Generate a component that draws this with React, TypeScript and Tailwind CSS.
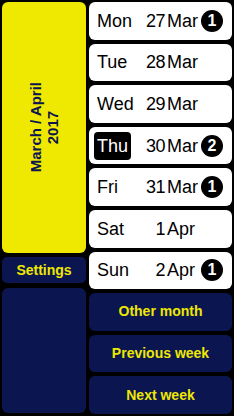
import React from 'react';

type Day = { name: string; num: string; month: string; count?: number; today?: boolean };

const days: Day[] = [
  { name: 'Mon', num: '27', month: 'Mar', count: 1 },
  { name: 'Tue', num: '28', month: 'Mar' },
  { name: 'Wed', num: '29', month: 'Mar' },
  { name: 'Thu', num: '30', month: 'Mar', count: 2, today: true },
  { name: 'Fri', num: '31', month: 'Mar', count: 1 },
  { name: 'Sat', num: '1', month: 'Apr' },
  { name: 'Sun', num: '2', month: 'Apr', count: 1 },
];

const actions = ['Other month', 'Previous week', 'Next week'];

const DayRow: React.FC<{ day: Day }> = ({ day }) => (
  <div className="flex-1 bg-white rounded-[6px] flex items-center pl-[5px] text-black text-[18px] leading-none">
    <div className="w-[49px] shrink-0 flex">
      <span className={day.today ? 'bg-black text-white rounded-[4px] px-[3px] py-[5px]' : 'px-[3px] py-[5px]'}>
        {day.name}
      </span>
    </div>
    <span className="w-[22px] shrink-0 text-right tracking-[-0.5px]">{day.num}</span>
    <span className="w-[33px] shrink-0 ml-[2px]">{day.month}</span>
    {day.count ? (
      <span className="ml-[1px] w-[22px] h-[22px] shrink-0 rounded-full bg-black text-white text-[16px] font-bold flex items-center justify-center">
        {day.count}
      </span>
    ) : null}
  </div>
);

export default function App() {
  return (
    <div className="w-[234px] h-[416px] bg-black flex gap-[3px] p-[2px] font-['Liberation_Sans',Arial,sans-serif]">
      <div className="w-[84px] flex flex-col">
        <div className="h-[251px] bg-[#efe800] rounded-[6px] flex items-center justify-center">
          <div className="[writing-mode:vertical-rl] rotate-180 text-center text-[#0b1650] text-[15px] font-bold leading-[17px]">
            March / April
            <br />
            2017
          </div>
        </div>
        <div className="mt-[4px] h-[26px] bg-[#0b1650] rounded-[5px] flex items-center justify-center text-[#efe800] text-[14px] font-bold">
          Settings
        </div>
        <div className="mt-[5px] h-[125px] bg-[#0b1650] rounded-[6px]" />
      </div>
      <div className="flex-1 flex flex-col gap-[4px]">
        {days.map(d => (
          <DayRow key={d.name} day={d} />
        ))}
        {actions.map(a => (
          <div key={a} className="flex-1 bg-[#0b1650] rounded-[6px] flex items-center justify-center text-[#efe800] text-[14px] font-bold">
            {a}
          </div>
        ))}
      </div>
    </div>
  );
}
